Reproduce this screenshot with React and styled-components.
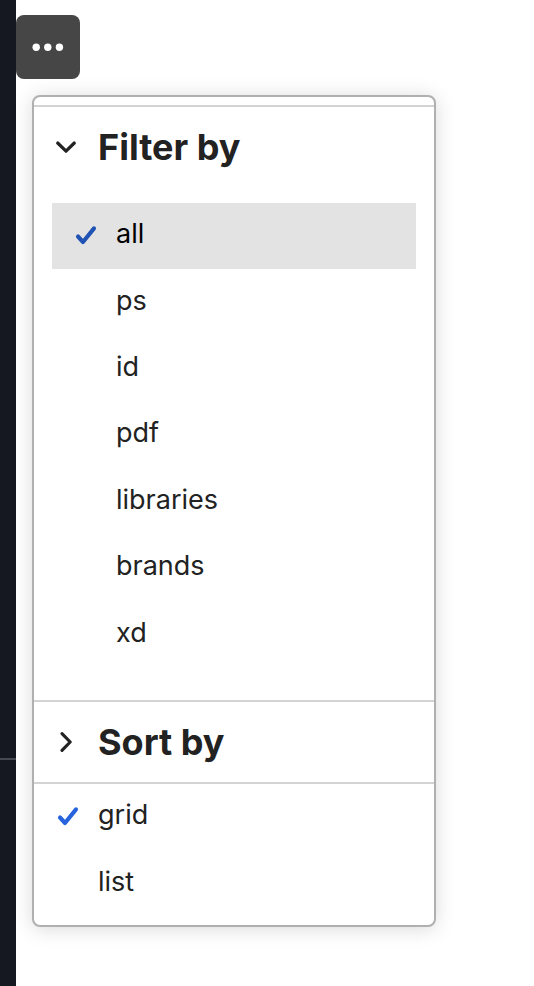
import React, { useState } from "react";
import styled, { createGlobalStyle } from "styled-components";

const GlobalStyle = createGlobalStyle`
  *, *::before, *::after { box-sizing: border-box; }
  body {
    margin: 0;
    background: #ffffff;
    color: #222222;
    font-family: Inter, "Liberation Sans", sans-serif;
  }
  button { font: inherit; color: inherit; }
`;

const Page = styled.div`
  display: flex;
  min-height: 100vh;
`;

const Rail = styled.aside`
  flex: none;
  display: grid;
  grid-template-rows: 758px 1fr;
  width: 16px;
  background: #151820;
`;

const RailSection = styled.div`
  border-top: ${({ $divided }) => ($divided ? "2px solid #464950" : "none")};
`;

const Content = styled.main`
  flex: 1;
  min-width: 0;
  padding: 15px 0 16px;
`;

const MoreButton = styled.button`
  display: flex;
  align-items: center;
  justify-content: center;
  width: 64px;
  height: 64px;
  padding: 0;
  border: 0;
  border-radius: 8px;
  background: #464646;
`;

const Popover = styled.div`
  width: calc(100% - 32px);
  max-width: 404px;
  margin: 16px 16px 0;
  padding: 8px 0;
  border: 2px solid #b0b0b0;
  border-radius: 8px;
  background: #ffffff;
  box-shadow: 0 2px 20px rgba(0, 0, 0, 0.15);
`;

const Section = styled.section`
  border-top: 2px solid #d3d3d3;
`;

const SectionTitle = styled.h2`
  margin: 0;
  font-size: 36px;
  line-height: 44px;
  font-weight: 700;
`;

const SectionToggle = styled.button`
  display: flex;
  align-items: center;
  gap: 20px;
  width: 100%;
  height: 80px;
  padding: 0 20px;
  border: 0;
  background: none;
  text-align: left;
`;

const OptionList = styled.div`
  display: grid;
  grid-auto-rows: 1fr;
  min-height: ${({ $inset }) => ($inset ? "465px" : "133px")};
  margin: ${({ $inset }) => ($inset ? "16px 18px 32px" : "0")};
`;

const Option = styled.button`
  display: flex;
  align-items: center;
  gap: 18px;
  min-height: 66px;
  padding: 0 22px 4px;
  border: 0;
  background: ${({ $highlighted }) => ($highlighted ? "#e3e3e3" : "transparent")};
  color: ${({ $highlighted }) => ($highlighted ? "#000000" : "#222222")};
  font-size: 27px;
  line-height: 36px;
  text-align: left;
`;

const IconSlot = styled.span`
  flex: none;
  display: flex;
  align-items: center;
  width: ${({ $size }) => $size}px;
  height: ${({ $size }) => $size}px;
`;

const DotsIcon = () => (
  <svg width="32" height="8" viewBox="0 0 32 8" fill="#ffffff" aria-hidden="true">
    <circle cx="4.2" cy="4.2" r="3.7" />
    <circle cx="15.8" cy="4.2" r="3.7" />
    <circle cx="27.4" cy="4.2" r="3.7" />
  </svg>
);

const ChevronIcon = ({ open }) => (
  <svg width="24" height="24" viewBox="0 0 24 24" fill="none" stroke="#222222" strokeWidth="3.2" strokeLinecap="round" strokeLinejoin="round" aria-hidden="true">
    <path d={open ? "M3.7 8 12 16.2 20.3 8" : "M8 3.7 16.2 12 8 20.3"} />
  </svg>
);

const CheckIcon = ({ dark }) => (
  <svg width="24" height="24" viewBox="0 0 24 24" fill="none" stroke={dark ? "#2053b4" : "#2763dc"} strokeWidth="4.1" strokeLinecap="round" strokeLinejoin="round" aria-hidden="true">
    <path d="M4 14.5 9 20 20 6.4" />
  </svg>
);

const filters = ["all", "ps", "id", "pdf", "libraries", "brands", "xd"];
const views = ["grid", "list"];

function Options({ label, items, selected, onSelect, inset }) {
  return (
    <OptionList role="radiogroup" aria-label={label} $inset={inset}>
      {items.map((item) => {
        const checked = item === selected;
        return (
          <Option
            key={item}
            type="button"
            role="radio"
            aria-checked={checked}
            $highlighted={inset && checked}
            onClick={() => onSelect(item)}
          >
            <IconSlot $size={24}>{checked && <CheckIcon dark={inset} />}</IconSlot>
            {item}
          </Option>
        );
      })}
    </OptionList>
  );
}

function Toggle({ label, open, onToggle }) {
  return (
    <SectionTitle>
      <SectionToggle type="button" aria-expanded={open} onClick={onToggle}>
        <IconSlot $size={24}>
          <ChevronIcon open={open} />
        </IconSlot>
        {label}
      </SectionToggle>
    </SectionTitle>
  );
}

export default function App() {
  const [filterOpen, setFilterOpen] = useState(true);
  const [sortOpen, setSortOpen] = useState(false);
  const [filter, setFilter] = useState("all");
  const [view, setView] = useState("grid");

  return (
    <>
      <GlobalStyle />
      <Page>
        <Rail>
          <RailSection />
          <RailSection $divided />
        </Rail>
        <Content>
          <MoreButton type="button" aria-label="More actions" aria-expanded="true">
            <DotsIcon />
          </MoreButton>
          <Popover>
            <Section>
              <Toggle label="Filter by" open={filterOpen} onToggle={() => setFilterOpen(!filterOpen)} />
              {filterOpen && <Options label="Filter by" items={filters} selected={filter} onSelect={setFilter} inset />}
            </Section>
            <Section>
              <Toggle label="Sort by" open={sortOpen} onToggle={() => setSortOpen(!sortOpen)} />
            </Section>
            <Section>
              <Options label="View" items={views} selected={view} onSelect={setView} />
            </Section>
          </Popover>
        </Content>
      </Page>
    </>
  );
}
